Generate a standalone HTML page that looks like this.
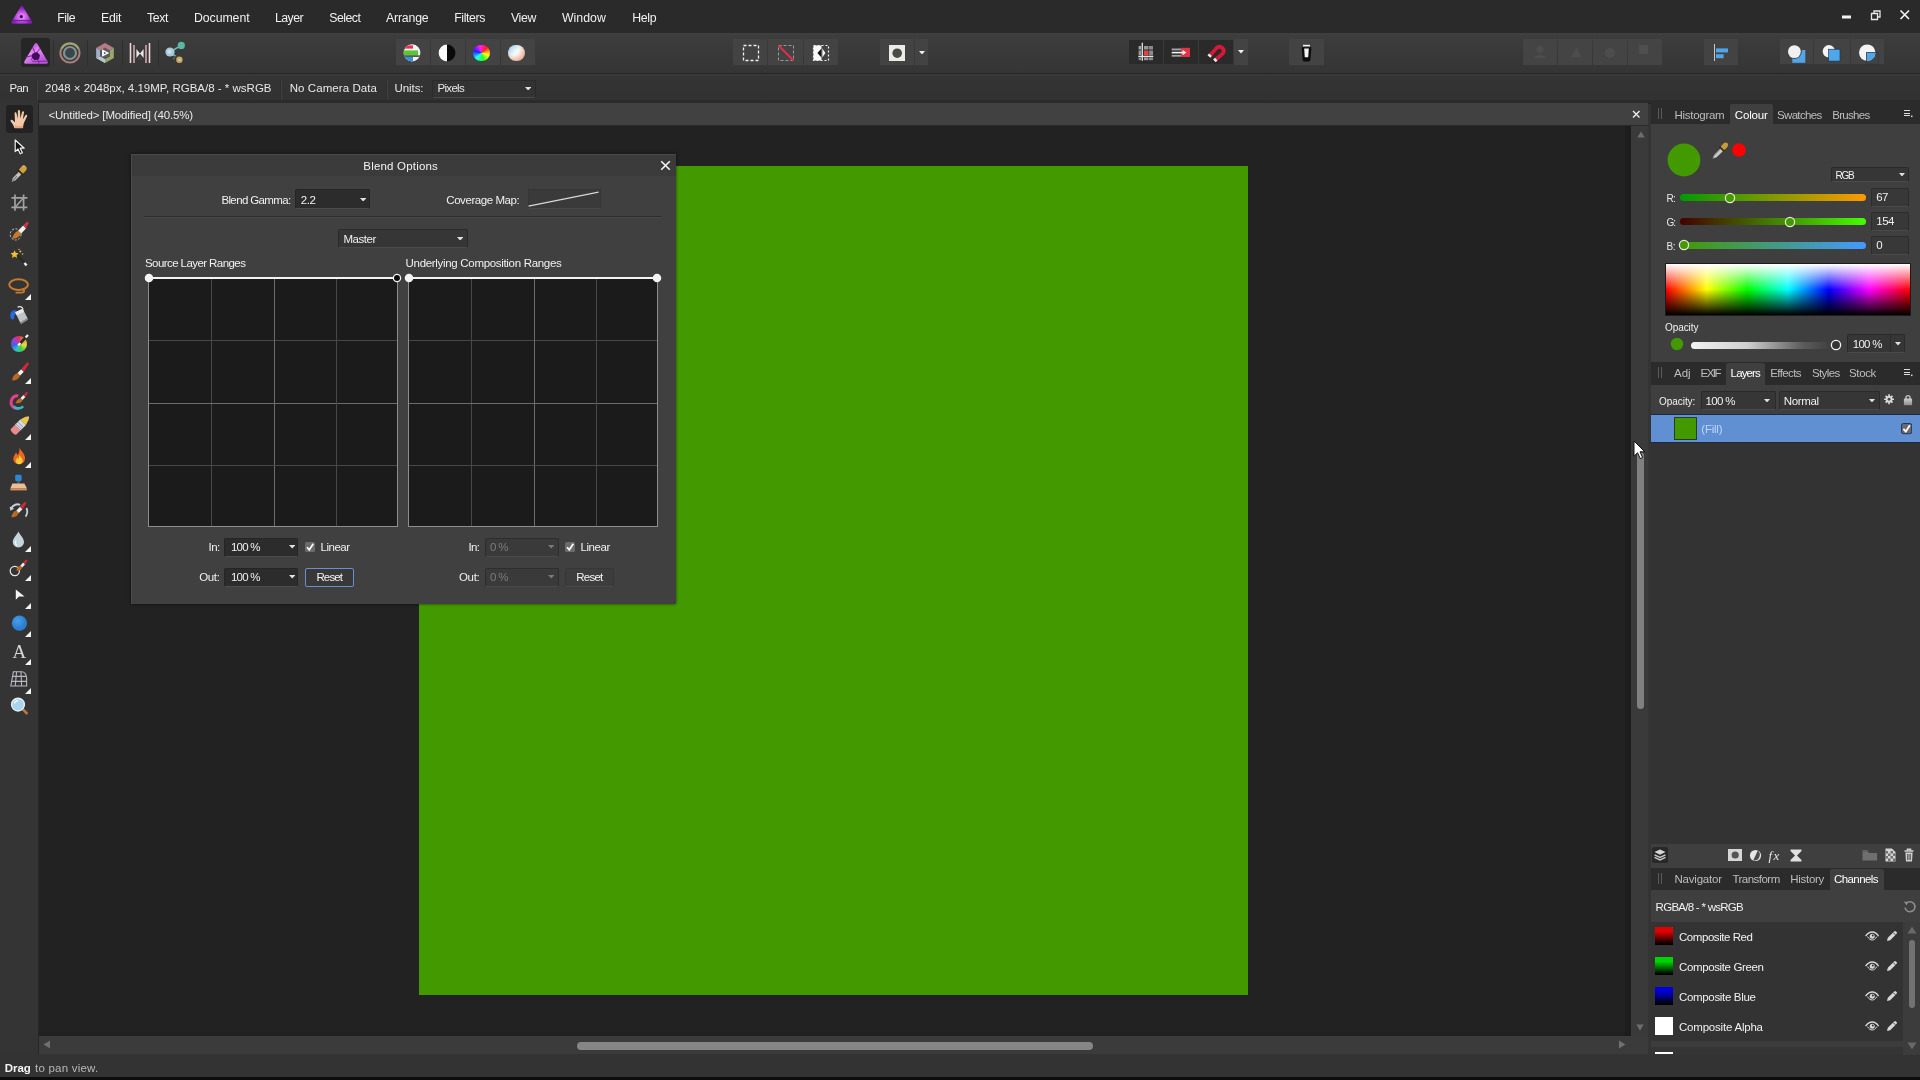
<!DOCTYPE html>
<html><head><meta charset="utf-8"><title>Affinity Photo</title>
<style>
html,body{margin:0;padding:0;background:#222;}
body{width:1920px;height:1080px;position:relative;overflow:hidden;will-change:transform;font-family:"Liberation Sans",sans-serif;}
div,span,svg{position:absolute;box-sizing:border-box;}
span{white-space:pre;}
</style></head><body>
<div style="left:0px;top:0px;width:1920px;height:33px;background:#2a2a2a;"></div>
<div style="left:0px;top:33px;width:1920px;height:40px;background:linear-gradient(180deg,#404040 0px,#3d3d3d 3px,#3a3a3a 14px,#353535 40px);"></div>
<div style="left:0px;top:73px;width:1920px;height:1.3px;background:#262626;"></div>
<div style="left:0px;top:74.3px;width:1920px;height:25.7px;background:linear-gradient(180deg,#3b3b3b 0px,#353535 2px,#333333 8px,#323232 26px);"></div>
<div style="left:0px;top:100px;width:38px;height:955px;background:#343434;"></div>
<div style="left:38px;top:100px;width:1882px;height:3px;background:#2b2b2b;"></div>
<div style="left:38px;top:103px;width:1px;height:952px;background:#262626;"></div>
<div style="left:39px;top:103px;width:1609px;height:21.5px;background:#414141;"></div>
<div style="left:39px;top:124.5px;width:1609px;height:1.5px;background:#2a2a2a;"></div>
<div style="left:39px;top:126px;width:1592px;height:910px;background:#222222;"></div>
<div style="left:1624.5px;top:126px;width:6.5px;height:910px;background:#1d1d1d;"></div>
<div style="left:39px;top:1032px;width:1586px;height:4px;background:#1f1f1f;"></div>
<div style="left:1631px;top:126px;width:17px;height:910px;background:#3a3a3a;"></div>
<div style="left:39px;top:1036px;width:1609px;height:18px;background:#3b3b3b;"></div>
<div style="left:1648px;top:104px;width:3px;height:951px;background:#343434;"></div>
<div style="left:0px;top:1054px;width:1920px;height:24px;background:#333333;"></div>
<div style="left:0px;top:1077px;width:1920px;height:3px;background:#0c0c0c;"></div>
<div style="left:419px;top:166px;width:829px;height:829px;background:#439a00;"></div>
<span style="left:57.20px;top:12.00px;font-size:12.3px;line-height:12.3px;letter-spacing:-0.504px;color:#f0f0f0;">File</span>
<span style="left:101.00px;top:12.00px;font-size:12.3px;line-height:12.3px;letter-spacing:-0.297px;color:#f0f0f0;">Edit</span>
<span style="left:147.00px;top:12.00px;font-size:12.3px;line-height:12.3px;letter-spacing:-0.388px;color:#f0f0f0;">Text</span>
<span style="left:194.00px;top:12.00px;font-size:12.3px;line-height:12.3px;letter-spacing:-0.068px;color:#f0f0f0;">Document</span>
<span style="left:275.00px;top:12.00px;font-size:12.3px;line-height:12.3px;letter-spacing:-0.552px;color:#f0f0f0;">Layer</span>
<span style="left:329.20px;top:12.00px;font-size:12.3px;line-height:12.3px;letter-spacing:-0.496px;color:#f0f0f0;">Select</span>
<span style="left:386.00px;top:12.00px;font-size:12.3px;line-height:12.3px;letter-spacing:-0.178px;color:#f0f0f0;">Arrange</span>
<span style="left:454.20px;top:12.00px;font-size:12.3px;line-height:12.3px;letter-spacing:-0.382px;color:#f0f0f0;">Filters</span>
<span style="left:511.00px;top:12.00px;font-size:12.3px;line-height:12.3px;letter-spacing:-0.358px;color:#f0f0f0;">View</span>
<span style="left:562.00px;top:12.00px;font-size:12.3px;line-height:12.3px;letter-spacing:0.011px;color:#f0f0f0;">Window</span>
<span style="left:632.30px;top:12.00px;font-size:12.3px;line-height:12.3px;letter-spacing:-0.323px;color:#f0f0f0;">Help</span>
<svg style="left:1842px;top:15px;" width="10" height="4" viewBox="0 0 10 4"><rect x="0" y="0.5" width="9" height="3" fill="#f2f2f2"/></svg>
<svg style="left:1870px;top:9px;" width="12" height="12" viewBox="0 0 12 12"><path d="M1.5 4.5h6v6h-6z M4 4V2h6v6H8" fill="none" stroke="#e8e8e8" stroke-width="1.3"/></svg>
<svg style="left:1899px;top:9px;" width="12" height="12" viewBox="0 0 12 12"><path d="M1.5 1.5l8.5 8.5M10 1.5L1.5 10" stroke="#f2f2f2" stroke-width="1.7"/></svg>
<span style="left:9.40px;top:83.00px;font-size:11.5px;line-height:11.5px;letter-spacing:-0.587px;color:#e8e8e8;">Pan</span>
<div style="left:36px;top:80px;width:1px;height:20px;background:#2d2d2d;"></div>
<div style="left:37px;top:80px;width:1px;height:20px;background:#424242;"></div>
<span style="left:45.00px;top:83.00px;font-size:11.5px;line-height:11.5px;letter-spacing:0.003px;color:#e8e8e8;">2048 × 2048px, 4.19MP, RGBA/8 - * wsRGB</span>
<div style="left:280px;top:80px;width:1px;height:20px;background:#2d2d2d;"></div>
<div style="left:281px;top:80px;width:1px;height:20px;background:#424242;"></div>
<span style="left:289.70px;top:83.00px;font-size:11.5px;line-height:11.5px;letter-spacing:0.073px;color:#e8e8e8;">No Camera Data</span>
<div style="left:386px;top:80px;width:1px;height:20px;background:#2d2d2d;"></div>
<div style="left:387px;top:80px;width:1px;height:20px;background:#424242;"></div>
<span style="left:394.40px;top:83.00px;font-size:11.5px;line-height:11.5px;letter-spacing:-0.049px;color:#e8e8e8;">Units:</span>
<div style="left:432px;top:79.5px;width:104px;height:18.5px;background:#333333;border:1px solid #2a2a2a;border-bottom-color:#484848;border-radius:2px;"></div>
<span style="left:437.50px;top:83.00px;font-size:11.5px;line-height:11.5px;letter-spacing:-0.696px;color:#e8e8e8;">Pixels</span>
<svg style="left:524.5px;top:86.7px;" width="6.4" height="3.6" viewBox="0 0 6.4 3.6"><path d="M0 0H6.4L3.2 3.6Z" fill="#e0e0e0"/></svg>
<span style="left:48.40px;top:110.00px;font-size:11.5px;line-height:11.5px;letter-spacing:-0.150px;color:#e8e8e8;">&lt;Untitled&gt; [Modified] (40.5%)</span>
<svg style="left:1632px;top:110px;" width="9" height="9" viewBox="0 0 9 9"><path d="M1 1l6.5 6.5M7.5 1L1 7.5" stroke="#eee" stroke-width="1.4"/></svg>
<span style="left:4.70px;top:1063.00px;font-size:11.5px;line-height:11.5px;letter-spacing:-0.025px;color:#f4f4f4;font-weight:700;">Drag</span>
<span style="left:35.00px;top:1063.00px;font-size:11.5px;line-height:11.5px;letter-spacing:0.222px;color:#b8b8b8;">to pan view.</span>
<div style="left:577px;top:1041.5px;width:515.5px;height:8px;background:#868686;border-radius:4px;"></div>
<div style="left:1636.6px;top:452px;width:7.4px;height:257px;background:#808080;border-radius:3.7px;"></div>
<svg style="left:43px;top:1040px;" width="8" height="9" viewBox="0 0 8 9"><path d="M7 0.5v8L0.5 4.5z" fill="#707070"/></svg>
<svg style="left:1618px;top:1040px;" width="8" height="9" viewBox="0 0 8 9"><path d="M1 0.5v8L7.5 4.5z" fill="#707070"/></svg>
<svg style="left:1636.8px;top:131.2px;" width="8" height="7" viewBox="0 0 8 7"><path d="M0.3 6.5h7.4L4 0.4z" fill="#6e6e6e"/></svg>
<svg style="left:1636.2px;top:1023.5px;" width="8" height="7" viewBox="0 0 8 7"><path d="M0.3 0.5h7.4L4 6.6z" fill="#6e6e6e"/></svg>
<div style="left:131px;top:153.5px;width:545px;height:450.5px;background:#404040;box-shadow:0 0 3px rgba(0,0,0,.6);"></div>
<div style="left:131px;top:153.5px;width:545px;height:22.5px;background:#3b3b3b;"></div>
<div style="left:131px;top:153.5px;width:545px;height:1px;background:#4a4a4a;"></div>
<div style="left:131px;top:153.5px;width:1px;height:450px;background:#4a4a4a;"></div>
<span style="left:363.30px;top:161.00px;font-size:11.5px;line-height:11.5px;letter-spacing:0.189px;color:#f2f2f2;">Blend Options</span>
<svg style="left:659.5px;top:159.5px;" width="11" height="11" viewBox="0 0 11 11"><path d="M1.2 1.2l8.6 8.6M9.8 1.2L1.2 9.8" stroke="#f4f4f4" stroke-width="1.6"/></svg>
<span style="left:221.40px;top:195.00px;font-size:11.5px;line-height:11.5px;letter-spacing:-0.625px;color:#f0f0f0;">Blend Gamma:</span>
<div style="left:295px;top:189px;width:75px;height:20px;background:#2c2c2c;border:1px solid #252525;border-bottom-color:#4c4c4c;border-radius:2px;"></div>
<span style="left:300.80px;top:195.00px;font-size:11.5px;line-height:11.5px;letter-spacing:-0.496px;color:#f0f0f0;">2.2</span>
<svg style="left:359.6px;top:197.7px;" width="6.4" height="3.6" viewBox="0 0 6.4 3.6"><path d="M0 0H6.4L3.2 3.6Z" fill="#e0e0e0"/></svg>
<span style="left:446.30px;top:195.00px;font-size:11.5px;line-height:11.5px;letter-spacing:-0.440px;color:#f0f0f0;">Coverage Map:</span>
<div style="left:527.5px;top:189px;width:73px;height:20px;background:#3a3a3a;border:1px solid #353535;border-bottom-color:#484848;"></div>
<svg style="left:527px;top:189px;" width="74" height="20" viewBox="0 0 74 20"><path d="M1.5 17.2L71.5 3.2" stroke="#d8d8d8" stroke-width="1.3"/></svg>
<div style="left:144px;top:216px;width:517px;height:1px;background:#2c2c2c;"></div>
<div style="left:144px;top:217px;width:517px;height:1px;background:#4a4a4a;"></div>
<div style="left:338px;top:229px;width:130px;height:19px;background:#363636;border:1px solid #2a2a2a;border-bottom-color:#4a4a4a;border-radius:2px;"></div>
<span style="left:343.40px;top:234.00px;font-size:11.5px;line-height:11.5px;letter-spacing:-0.424px;color:#f0f0f0;">Master</span>
<svg style="left:456.6px;top:236.7px;" width="6.4" height="3.6" viewBox="0 0 6.4 3.6"><path d="M0 0H6.4L3.2 3.6Z" fill="#e0e0e0"/></svg>
<span style="left:145.00px;top:258.00px;font-size:11.5px;line-height:11.5px;letter-spacing:-0.575px;color:#f0f0f0;">Source Layer Ranges</span>
<span style="left:405.60px;top:258.00px;font-size:11.5px;line-height:11.5px;letter-spacing:-0.314px;color:#f0f0f0;">Underlying Composition Ranges</span>
<div style="left:148.0px;top:277px;width:250px;height:249.5px;background:#1b1b1b;border:1px solid #8e8e8e;border-top:none;"></div>
<div style="left:211px;top:278px;width:1px;height:248px;background:#484848;"></div>
<div style="left:149.0px;top:340px;width:248px;height:1px;background:#484848;"></div>
<div style="left:274px;top:278px;width:1px;height:248px;background:#6c6c6c;"></div>
<div style="left:149.0px;top:402.5px;width:248px;height:1px;background:#6c6c6c;"></div>
<div style="left:336px;top:278px;width:1px;height:248px;background:#484848;"></div>
<div style="left:149.0px;top:465px;width:248px;height:1px;background:#484848;"></div>
<div style="left:148.5px;top:277px;width:249px;height:2px;background:#f4f4f4;"></div>
<div style="left:408.0px;top:277px;width:250px;height:249.5px;background:#1b1b1b;border:1px solid #8e8e8e;border-top:none;"></div>
<div style="left:471px;top:278px;width:1px;height:248px;background:#484848;"></div>
<div style="left:409.0px;top:340px;width:248px;height:1px;background:#484848;"></div>
<div style="left:534px;top:278px;width:1px;height:248px;background:#6c6c6c;"></div>
<div style="left:409.0px;top:402.5px;width:248px;height:1px;background:#6c6c6c;"></div>
<div style="left:596px;top:278px;width:1px;height:248px;background:#484848;"></div>
<div style="left:409.0px;top:465px;width:248px;height:1px;background:#484848;"></div>
<div style="left:408.5px;top:277px;width:249px;height:2px;background:#f4f4f4;"></div>
<svg style="left:144.2px;top:273px;" width="10" height="10" viewBox="0 0 10 10"><circle cx="5" cy="5" r="3.6" fill="#f4f4f4" stroke="#f4f4f4" stroke-width="1.3"/></svg>
<svg style="left:392.2px;top:273px;" width="10" height="10" viewBox="0 0 10 10"><circle cx="5" cy="5" r="3.6" fill="#0a0a0a" stroke="#f4f4f4" stroke-width="1.3"/></svg>
<svg style="left:404px;top:273px;" width="10" height="10" viewBox="0 0 10 10"><circle cx="5" cy="5" r="3.6" fill="#f4f4f4" stroke="#f4f4f4" stroke-width="1.3"/></svg>
<svg style="left:652.2px;top:273px;" width="10" height="10" viewBox="0 0 10 10"><circle cx="5" cy="5" r="3.6" fill="#f4f4f4" stroke="#f4f4f4" stroke-width="1.3"/></svg>
<span style="left:208.60px;top:542.00px;font-size:11.5px;line-height:11.5px;letter-spacing:-0.629px;color:#f0f0f0;">In:</span>
<div style="left:224px;top:537.5px;width:74px;height:19px;background:#2c2c2c;border:1px solid #252525;border-bottom-color:#4c4c4c;border-radius:2px;"></div>
<span style="left:231.00px;top:542.00px;font-size:11.5px;line-height:11.5px;letter-spacing:-0.782px;color:#f0f0f0;">100 %</span>
<svg style="left:288.7px;top:545.2px;" width="6.4" height="3.6" viewBox="0 0 6.4 3.6"><path d="M0 0H6.4L3.2 3.6Z" fill="#e0e0e0"/></svg>
<svg style="left:305px;top:542.3px;" width="10" height="10" viewBox="0 0 10 10"><rect x="0" y="0" width="10" height="10" rx="1.5" fill="#6b6b6b"/><path d="M2 5.2l2.3 2.6L8.3 1.8" fill="none" stroke="#fff" stroke-width="1.7"/></svg>
<span style="left:320.60px;top:542.00px;font-size:11.5px;line-height:11.5px;letter-spacing:-0.511px;color:#f0f0f0;">Linear</span>
<span style="left:199.20px;top:572.00px;font-size:11.5px;line-height:11.5px;letter-spacing:-0.358px;color:#f0f0f0;">Out:</span>
<div style="left:224px;top:567.5px;width:74px;height:19px;background:#2c2c2c;border:1px solid #252525;border-bottom-color:#4c4c4c;border-radius:2px;"></div>
<span style="left:231.00px;top:572.00px;font-size:11.5px;line-height:11.5px;letter-spacing:-0.782px;color:#f0f0f0;">100 %</span>
<svg style="left:288.7px;top:575.2px;" width="6.4" height="3.6" viewBox="0 0 6.4 3.6"><path d="M0 0H6.4L3.2 3.6Z" fill="#e0e0e0"/></svg>
<div style="left:304.5px;top:567.5px;width:49.5px;height:19px;background:#383838;border:1px solid #6d8fd0;border-radius:2px;"></div>
<span style="left:316.40px;top:572.00px;font-size:11.5px;line-height:11.5px;letter-spacing:-0.848px;color:#f4f4f4;">Reset</span>
<span style="left:468.40px;top:542.00px;font-size:11.5px;line-height:11.5px;letter-spacing:-0.595px;color:#f0f0f0;">In:</span>
<div style="left:484.5px;top:537.5px;width:74px;height:19px;background:#3a3a3a;border:1px solid #2e2e2e;border-bottom-color:#4a4a4a;border-radius:2px;"></div>
<span style="left:490.00px;top:542.00px;font-size:11.5px;line-height:11.5px;letter-spacing:-0.672px;color:#7c7c7c;">0 %</span>
<svg style="left:548.0999999999999px;top:545.2px;" width="6.4" height="3.6" viewBox="0 0 6.4 3.6"><path d="M0 0H6.4L3.2 3.6Z" fill="#7a7a7a"/></svg>
<svg style="left:565px;top:542.3px;" width="10" height="10" viewBox="0 0 10 10"><rect x="0" y="0" width="10" height="10" rx="1.5" fill="#6b6b6b"/><path d="M2 5.2l2.3 2.6L8.3 1.8" fill="none" stroke="#fff" stroke-width="1.7"/></svg>
<span style="left:580.60px;top:542.00px;font-size:11.5px;line-height:11.5px;letter-spacing:-0.461px;color:#f0f0f0;">Linear</span>
<span style="left:459.00px;top:572.00px;font-size:11.5px;line-height:11.5px;letter-spacing:-0.333px;color:#f0f0f0;">Out:</span>
<div style="left:484.5px;top:567.5px;width:74px;height:19px;background:#3a3a3a;border:1px solid #2e2e2e;border-bottom-color:#4a4a4a;border-radius:2px;"></div>
<span style="left:490.00px;top:572.00px;font-size:11.5px;line-height:11.5px;letter-spacing:-0.672px;color:#7c7c7c;">0 %</span>
<svg style="left:548.0999999999999px;top:575.2px;" width="6.4" height="3.6" viewBox="0 0 6.4 3.6"><path d="M0 0H6.4L3.2 3.6Z" fill="#7a7a7a"/></svg>
<div style="left:564.5px;top:567.5px;width:49.5px;height:19px;background:#3d3d3d;border:1px solid #373737;border-bottom-color:#4a4a4a;border-radius:2px;"></div>
<span style="left:576.30px;top:572.00px;font-size:11.5px;line-height:11.5px;letter-spacing:-0.768px;color:#f4f4f4;">Reset</span>
<div style="left:1651px;top:104px;width:269px;height:951px;background:#3f3f3f;"></div>
<div style="left:1651px;top:103px;width:269px;height:21.2px;background:#2b2b2b;"></div>
<div style="left:1730px;top:104px;width:42.5px;height:21.2px;background:#3f3f3f;border-radius:2px 2px 0 0;"></div>
<div style="left:1658px;top:108px;width:1px;height:11px;background:#5a5a5a;"></div>
<div style="left:1661px;top:108px;width:1px;height:11px;background:#5a5a5a;"></div>
<span style="left:1674.40px;top:110.00px;font-size:11.5px;line-height:11.5px;letter-spacing:-0.267px;color:#bdbdbd;">Histogram</span>
<span style="left:1734.80px;top:110.00px;font-size:11.5px;line-height:11.5px;letter-spacing:-0.163px;color:#ffffff;">Colour</span>
<span style="left:1777.00px;top:110.00px;font-size:11.5px;line-height:11.5px;letter-spacing:-0.670px;color:#bdbdbd;">Swatches</span>
<span style="left:1832.20px;top:110.00px;font-size:11.5px;line-height:11.5px;letter-spacing:-0.698px;color:#bdbdbd;">Brushes</span>
<svg style="left:1903px;top:109.5px;" width="10" height="9" viewBox="0 0 10 9"><path d="M0.5 0.8h6.6M0.5 3.2h6.6M0.5 5.6h6.6" stroke="#dcdcdc" stroke-width="1.3" shape-rendering="crispEdges"/><rect x="8" y="5.6" width="1.5" height="1.5" fill="#dcdcdc"/></svg>
<svg style="left:1666.2px;top:141.8px;" width="36" height="36" viewBox="0 0 36 36"><circle cx="18" cy="18" r="16.4" fill="#439a00"/></svg>
<svg style="left:1731px;top:142px;" width="16" height="16" viewBox="0 0 16 16"><circle cx="8" cy="8" r="6.8" fill="#ff0000"/></svg>
<svg style="left:1711px;top:141px;" width="19" height="19" viewBox="0 0 19 19"><path d="M2 17.5l1.2-3.6 6.6-6.8 2.6 2.6-6.8 6.6z" fill="#c9c9c9"/><path d="M2 17.5l1-2.8 6.4-6.6" stroke="#8a8a8a" stroke-width="1" fill="none"/><path d="M9.2 6.2l3.2-3.6c1.4-1.4 3.4-1.2 4.2 0s.6 2.6-.6 3.8l-3.4 3.2z" fill="#c99a3c"/><path d="M8.4 5.6l4.8 4.8" stroke="#3a2a10" stroke-width="1.6"/></svg>
<div style="left:1831px;top:167px;width:78px;height:15px;background:#363636;border:1px solid #2a2a2a;border-bottom-color:#4a4a4a;border-radius:2px;"></div>
<span style="left:1835.60px;top:171.00px;font-size:10px;line-height:10px;letter-spacing:-1.323px;color:#f0f0f0;">RGB</span>
<svg style="left:1899.0px;top:172.75px;" width="6" height="3.5" viewBox="0 0 6 3.5"><path d="M0 0H6L3.0 3.5Z" fill="#e0e0e0"/></svg>
<span style="left:1666.60px;top:194.00px;font-size:10px;line-height:10px;letter-spacing:-0.800px;color:#e8e8e8;">R:</span>
<div style="left:1679.5px;top:193.7px;width:186px;height:7.6px;background:linear-gradient(90deg,rgb(0,154,0),rgb(255,154,0));border-radius:4px;"></div>
<svg style="left:1724.2px;top:191.5px;" width="12" height="12" viewBox="0 0 12 12"><circle cx="6" cy="6" r="4.6" fill="#439a00" stroke="#e8e8cf" stroke-width="1.3"/></svg>
<div style="left:1871px;top:188px;width:38px;height:18.5px;background:#383838;border:1px solid #2c2c2c;border-bottom-color:#4a4a4a;border-radius:2px;"></div>
<span style="left:1876.30px;top:192.00px;font-size:11.5px;line-height:11.5px;letter-spacing:-0.796px;color:#f0f0f0;">67</span>
<span style="left:1666.60px;top:218.00px;font-size:10px;line-height:10px;letter-spacing:-1.078px;color:#e8e8e8;">G:</span>
<div style="left:1679.5px;top:217.7px;width:186px;height:7.6px;background:linear-gradient(90deg,rgb(67,0,0),rgb(67,255,0));border-radius:4px;"></div>
<svg style="left:1784px;top:215.5px;" width="12" height="12" viewBox="0 0 12 12"><circle cx="6" cy="6" r="4.6" fill="#439a00" stroke="#e8e8cf" stroke-width="1.3"/></svg>
<div style="left:1871px;top:212px;width:38px;height:18.5px;background:#383838;border:1px solid #2c2c2c;border-bottom-color:#4a4a4a;border-radius:2px;"></div>
<span style="left:1876.30px;top:216.00px;font-size:11.5px;line-height:11.5px;letter-spacing:-0.562px;color:#f0f0f0;">154</span>
<span style="left:1666.60px;top:242.00px;font-size:10px;line-height:10px;letter-spacing:-0.524px;color:#e8e8e8;">B:</span>
<div style="left:1679.5px;top:241.5px;width:186px;height:7.6px;background:linear-gradient(90deg,rgb(67,154,0),rgb(67,154,255));border-radius:4px;"></div>
<svg style="left:1678px;top:239.3px;" width="12" height="12" viewBox="0 0 12 12"><circle cx="6" cy="6" r="4.6" fill="#439a00" stroke="#e8e8cf" stroke-width="1.3"/></svg>
<div style="left:1871px;top:236px;width:38px;height:18.5px;background:#383838;border:1px solid #2c2c2c;border-bottom-color:#4a4a4a;border-radius:2px;"></div>
<span style="left:1876.30px;top:240.00px;font-size:11.5px;line-height:11.5px;letter-spacing:-0.196px;color:#f0f0f0;">0</span>
<div style="left:1664.5px;top:262.5px;width:246px;height:53.5px;background:linear-gradient(180deg,#fff 0%,rgba(255,255,255,0) 50%,rgba(0,0,0,0) 50%,#000 100%),linear-gradient(90deg,#f00 0%,#ff0 16.67%,#0f0 33.33%,#0ff 50%,#00f 66.67%,#f0f 83.33%,#f00 100%);border:1px solid #1c1c1c;"></div>
<span style="left:1665.00px;top:323.00px;font-size:10px;line-height:10px;letter-spacing:-0.072px;color:#f0f0f0;">Opacity</span>
<svg style="left:1670px;top:337px;" width="14" height="14" viewBox="0 0 14 14"><circle cx="7" cy="7" r="6.2" fill="#439a00"/></svg>
<div style="left:1691px;top:342px;width:140px;height:7px;background:linear-gradient(90deg,#f2f2f2 0%,#d0d0d0 40%,rgba(120,120,120,.5) 80%,rgba(70,70,70,0) 100%);border-radius:3.5px;"></div>
<svg style="left:1830px;top:339px;" width="12" height="12" viewBox="0 0 12 12"><circle cx="6" cy="6" r="4.6" fill="#333" stroke="#f4f4f4" stroke-width="1.3"/></svg>
<div style="left:1846.5px;top:334px;width:58.5px;height:18.5px;background:#363636;border:1px solid #2a2a2a;border-bottom-color:#4a4a4a;border-radius:2px;"></div>
<div style="left:1890px;top:335px;width:1px;height:16.5px;background:#2c2c2c;"></div>
<span style="left:1852.80px;top:339.00px;font-size:11.5px;line-height:11.5px;letter-spacing:-0.742px;color:#f0f0f0;">100 %</span>
<svg style="left:1895.0px;top:342.25px;" width="6" height="3.5" viewBox="0 0 6 3.5"><path d="M0 0H6L3.0 3.5Z" fill="#e0e0e0"/></svg>
<div style="left:1651px;top:362px;width:269px;height:23px;background:#2b2b2b;"></div>
<div style="left:1726px;top:363px;width:39px;height:23px;background:#3f3f3f;border-radius:2px 2px 0 0;"></div>
<div style="left:1658px;top:367px;width:1px;height:11px;background:#5a5a5a;"></div>
<div style="left:1661px;top:367px;width:1px;height:11px;background:#5a5a5a;"></div>
<span style="left:1674.00px;top:368.00px;font-size:11.5px;line-height:11.5px;letter-spacing:-0.007px;color:#bdbdbd;">Adj</span>
<span style="left:1700.50px;top:368.00px;font-size:11.5px;line-height:11.5px;letter-spacing:-1.515px;color:#bdbdbd;">EXIF</span>
<span style="left:1730.60px;top:368.00px;font-size:11.5px;line-height:11.5px;letter-spacing:-0.853px;color:#ffffff;">Layers</span>
<span style="left:1770.30px;top:368.00px;font-size:11.5px;line-height:11.5px;letter-spacing:-0.606px;color:#bdbdbd;">Effects</span>
<span style="left:1812.00px;top:368.00px;font-size:11.5px;line-height:11.5px;letter-spacing:-0.636px;color:#bdbdbd;">Styles</span>
<span style="left:1849.00px;top:368.00px;font-size:11.5px;line-height:11.5px;letter-spacing:-0.352px;color:#bdbdbd;">Stock</span>
<svg style="left:1903px;top:368.5px;" width="10" height="9" viewBox="0 0 10 9"><path d="M0.5 0.8h6.6M0.5 3.2h6.6M0.5 5.6h6.6" stroke="#dcdcdc" stroke-width="1.3" shape-rendering="crispEdges"/><rect x="8" y="5.6" width="1.5" height="1.5" fill="#dcdcdc"/></svg>
<span style="left:1659.00px;top:397.00px;font-size:10px;line-height:10px;letter-spacing:-0.047px;color:#f0f0f0;">Opacity:</span>
<div style="left:1701px;top:391px;width:75px;height:19px;background:#363636;border:1px solid #2a2a2a;border-bottom-color:#4a4a4a;border-radius:2px;"></div>
<span style="left:1705.60px;top:396.00px;font-size:11.5px;line-height:11.5px;letter-spacing:-0.682px;color:#f0f0f0;">100 %</span>
<svg style="left:1764.0px;top:398.75px;" width="6" height="3.5" viewBox="0 0 6 3.5"><path d="M0 0H6L3.0 3.5Z" fill="#e0e0e0"/></svg>
<div style="left:1779px;top:391px;width:101px;height:19px;background:#363636;border:1px solid #2a2a2a;border-bottom-color:#4a4a4a;border-radius:2px;"></div>
<span style="left:1783.80px;top:396.00px;font-size:11.5px;line-height:11.5px;letter-spacing:-0.343px;color:#f0f0f0;">Normal</span>
<svg style="left:1869.0px;top:398.75px;" width="6" height="3.5" viewBox="0 0 6 3.5"><path d="M0 0H6L3.0 3.5Z" fill="#e0e0e0"/></svg>
<svg style="left:1883px;top:394px;" width="12" height="12" viewBox="0 0 12 12"><g transform="translate(0.9,0.1) scale(0.86)"><path d="M6 0.300v11.400M0.300 6h11.400M2 2l8 8M10 2l-8 8" stroke="#dcdcdc" stroke-width="1.900"/><circle cx="6" cy="6" r="3.900" fill="#dcdcdc"/><circle cx="6" cy="6" r="1.700" fill="#484848"/></g></svg>
<svg style="left:1903px;top:394px;" width="10" height="12" viewBox="0 0 10 12"><path d="M3 5V3.600a2 2 0 0 1 4 0V5" fill="none" stroke="#c4c4c4" stroke-width="1.400"/><defs><linearGradient id="lk" x1="0" y1="0" x2="0" y2="1"><stop offset="0" stop-color="#cecece"/><stop offset="1" stop-color="#8c8c8c"/></linearGradient></defs><rect x="0.900" y="4.600" width="8.200" height="6.600" rx="0.800" fill="url(#lk)"/></svg>
<div style="left:1651px;top:414px;width:269px;height:430px;background:#333333;"></div>
<div style="left:1651px;top:414.2px;width:269px;height:28.5px;background:#1c2a44;"></div>
<div style="left:1651px;top:415.2px;width:269px;height:26.5px;background:#6090d2;"></div>
<div style="left:1674px;top:417.2px;width:23px;height:22.5px;background:#439a00;border:1px solid #2b3a20;"></div>
<span style="left:1701.30px;top:424.00px;font-size:11.5px;line-height:11.5px;letter-spacing:-0.225px;color:#bcd6ff;">(Fill)</span>
<svg style="left:1901.3px;top:423.4px;" width="11.2" height="11.2" viewBox="0 0 11.2 11.2"><rect x="0.500" y="0.500" width="10.200" height="10.200" rx="1.800" fill="#6a6a6a" stroke="#1c3568" stroke-width="1"/><path d="M2.4 5.8l2.4 2.8L8.9 2.2" fill="none" stroke="#fff" stroke-width="1.8"/></svg>
<div style="left:1651px;top:844.3px;width:269px;height:23.5px;background:#3f3f3f;"></div>
<svg style="left:1652px;top:847px;" width="16" height="16" viewBox="0 0 16 16"><rect x="0" y="0" width="16" height="16" rx="2" fill="#282828"/><path d="M8 2.5l5.5 2.6L8 7.7 2.5 5.1z" fill="#d8d8d8"/><path d="M2.5 7.8L8 10.4l5.5-2.6M2.5 10.4L8 13l5.5-2.6" fill="none" stroke="#c8c8c8" stroke-width="1.4"/></svg>
<svg style="left:1727.8px;top:849px;" width="14.4" height="12" viewBox="0 0 14.4 12"><rect x="0" y="0" width="14.4" height="12" fill="#d6d6d6"/><circle cx="7.2" cy="6" r="3.6" fill="#555"/></svg>
<svg style="left:1748.5px;top:848.5px;" width="13" height="13" viewBox="0 0 13 13"><circle cx="6.5" cy="6.5" r="5.6" fill="#e4e4e4"/><path d="M8.8 1.6A5.6 5.6 0 0 1 4.2 11.4z" fill="#4a4a4a"/></svg>
<span style="left:1768.60px;top:849.43px;font-size:13px;line-height:13px;letter-spacing:1.394px;color:#e8e8e8;font-family:'Liberation Serif',serif;font-style:italic;">fx</span>
<svg style="left:1789.5px;top:848.5px;" width="12" height="13" viewBox="0 0 12 13"><path d="M0.5 0.5h11v1.6L7 6.5l4.5 4.4v1.6h-11v-1.6L5 6.5 0.5 2.1z" fill="#e0e0e0"/></svg>
<svg style="left:1862px;top:848.5px;" width="15.5" height="12" viewBox="0 0 15.5 12"><path d="M0.5 2.5h5.2l1.4 1.6h8v7.4H0.5z" fill="#6f6f6f"/><path d="M0.5 1.2h5l1 1.3h-6z" fill="#6f6f6f"/></svg>
<svg style="left:1884.5px;top:848px;" width="11" height="14" viewBox="0 0 11 14"><path d="M0.5 0.5h6.4l3.6 3.6v9.4h-10z" fill="#d4d4d4"/><path d="M0.5 3h2.5v2.5H0.5zM5.5 3H8v2.5H5.5zM3 5.5h2.5V8H3zM8 5.5h2.5V8H8zM0.5 8H3v2.5H0.5zM5.5 8H8v2.5H5.5zM3 10.5h2.5V13H3zM8 10.5h2.5V13H8z" fill="#707070"/></svg>
<svg style="left:1904px;top:848px;" width="10" height="14" viewBox="0 0 10 14"><path d="M0.5 3h9M3.4 3V1.2h3.2V3" stroke="#d0d0d0" stroke-width="1.4" fill="none"/><path d="M1.4 4.5h7.2l-0.6 9H2z" fill="#d0d0d0"/><path d="M3.6 6v6M5 6v6M6.4 6v6" stroke="#444" stroke-width="0.8"/></svg>
<div style="left:1651px;top:867.7px;width:269px;height:22.5px;background:#2b2b2b;"></div>
<div style="left:1830px;top:868.7px;width:53.5px;height:22.5px;background:#3f3f3f;border-radius:2px 2px 0 0;"></div>
<div style="left:1658px;top:872.7px;width:1px;height:11px;background:#5a5a5a;"></div>
<div style="left:1661px;top:872.7px;width:1px;height:11px;background:#5a5a5a;"></div>
<span style="left:1674.40px;top:874.00px;font-size:11.5px;line-height:11.5px;letter-spacing:-0.191px;color:#bdbdbd;">Navigator</span>
<span style="left:1732.50px;top:874.00px;font-size:11.5px;line-height:11.5px;letter-spacing:-0.530px;color:#bdbdbd;">Transform</span>
<span style="left:1790.30px;top:874.00px;font-size:11.5px;line-height:11.5px;letter-spacing:-0.297px;color:#bdbdbd;">History</span>
<span style="left:1834.00px;top:874.00px;font-size:11.5px;line-height:11.5px;letter-spacing:-0.574px;color:#ffffff;">Channels</span>
<span style="left:1655.60px;top:902.00px;font-size:11.5px;line-height:11.5px;letter-spacing:-0.728px;color:#f0f0f0;">RGBA/8 - * wsRGB</span>
<svg style="left:1903px;top:899.5px;" width="14" height="14" viewBox="0 0 14 14"><path d="M3.2 3.4A5 5 0 1 1 2 7.6" fill="none" stroke="#8e8e8e" stroke-width="1.6"/><path d="M0.8 1.6l4 0.4-1.2 3.6z" fill="#8e8e8e"/></svg>
<div style="left:1651px;top:921.5px;width:252px;height:119.5px;background:#333333;"></div>
<div style="left:1903px;top:921.5px;width:17px;height:133px;background:#3c3c3c;"></div>
<div style="left:1651px;top:1041px;width:252px;height:6px;background:#3c3c3c;"></div>
<div style="left:1651px;top:1047px;width:252px;height:7.5px;background:#353535;"></div>
<svg style="left:1906.5px;top:926px;" width="10" height="8" viewBox="0 0 10 8"><path d="M0.5 7.5h9L5 0.5z" fill="#686868"/></svg>
<svg style="left:1906.5px;top:1042px;" width="10" height="8" viewBox="0 0 10 8"><path d="M0.5 0.5h9L5 7.5z" fill="#686868"/></svg>
<div style="left:1908.6px;top:939.5px;width:6.2px;height:68px;background:#727272;border-radius:3.1px;"></div>
<div style="left:1655px;top:926.8px;width:18px;height:18px;background:linear-gradient(180deg,#e00000 0%,#e00000 25%,#000 95%);"></div>
<span style="left:1679.00px;top:932.00px;font-size:11.5px;line-height:11.5px;letter-spacing:-0.443px;color:#f0f0f0;">Composite Red</span>
<svg style="left:1865px;top:930.8px;" width="15" height="11" viewBox="0 0 15 11"><path d="M0.6 5.2C2.6 2 5 1 7.2 1s4.6 1 6.4 4.2" fill="none" stroke="#d8d8d8" stroke-width="1.3"/><path d="M2.6 5.6c1.4 2.6 3 3.4 4.6 3.4s3.2-0.8 4.6-3.4" fill="none" stroke="#d8d8d8" stroke-width="1"/><circle cx="7.2" cy="5.2" r="2.5" fill="#d8d8d8"/><circle cx="7.8" cy="4.6" r="1" fill="#333"/></svg>
<svg style="left:1886.4px;top:929.8px;" width="12" height="12" viewBox="0 0 12 12"><path d="M1 11l0.8-3.2L8.2 1.4a1.2 1.2 0 0 1 1.7 0l0.7 0.7a1.2 1.2 0 0 1 0 1.7L4.2 10.2z" fill="#d8d8d8"/><path d="M7.2 2.6l2.2 2.2" stroke="#333" stroke-width="0.9"/></svg>
<div style="left:1655px;top:956.8px;width:18px;height:18px;background:linear-gradient(180deg,#00d400 0%,#00d400 25%,#000 95%);"></div>
<span style="left:1679.00px;top:962.00px;font-size:11.5px;line-height:11.5px;letter-spacing:-0.375px;color:#f0f0f0;">Composite Green</span>
<svg style="left:1865px;top:960.8px;" width="15" height="11" viewBox="0 0 15 11"><path d="M0.6 5.2C2.6 2 5 1 7.2 1s4.6 1 6.4 4.2" fill="none" stroke="#d8d8d8" stroke-width="1.3"/><path d="M2.6 5.6c1.4 2.6 3 3.4 4.6 3.4s3.2-0.8 4.6-3.4" fill="none" stroke="#d8d8d8" stroke-width="1"/><circle cx="7.2" cy="5.2" r="2.5" fill="#d8d8d8"/><circle cx="7.8" cy="4.6" r="1" fill="#333"/></svg>
<svg style="left:1886.4px;top:959.8px;" width="12" height="12" viewBox="0 0 12 12"><path d="M1 11l0.8-3.2L8.2 1.4a1.2 1.2 0 0 1 1.7 0l0.7 0.7a1.2 1.2 0 0 1 0 1.7L4.2 10.2z" fill="#d8d8d8"/><path d="M7.2 2.6l2.2 2.2" stroke="#333" stroke-width="0.9"/></svg>
<div style="left:1655px;top:986.8px;width:18px;height:18px;background:linear-gradient(180deg,#0000d8 0%,#0000d8 25%,#000 95%);"></div>
<span style="left:1679.00px;top:992.00px;font-size:11.5px;line-height:11.5px;letter-spacing:-0.334px;color:#f0f0f0;">Composite Blue</span>
<svg style="left:1865px;top:990.8px;" width="15" height="11" viewBox="0 0 15 11"><path d="M0.6 5.2C2.6 2 5 1 7.2 1s4.6 1 6.4 4.2" fill="none" stroke="#d8d8d8" stroke-width="1.3"/><path d="M2.6 5.6c1.4 2.6 3 3.4 4.6 3.4s3.2-0.8 4.6-3.4" fill="none" stroke="#d8d8d8" stroke-width="1"/><circle cx="7.2" cy="5.2" r="2.5" fill="#d8d8d8"/><circle cx="7.8" cy="4.6" r="1" fill="#333"/></svg>
<svg style="left:1886.4px;top:989.8px;" width="12" height="12" viewBox="0 0 12 12"><path d="M1 11l0.8-3.2L8.2 1.4a1.2 1.2 0 0 1 1.7 0l0.7 0.7a1.2 1.2 0 0 1 0 1.7L4.2 10.2z" fill="#d8d8d8"/><path d="M7.2 2.6l2.2 2.2" stroke="#333" stroke-width="0.9"/></svg>
<div style="left:1655px;top:1016.8px;width:18px;height:18px;background:#ffffff;"></div>
<span style="left:1679.00px;top:1022.00px;font-size:11.5px;line-height:11.5px;letter-spacing:-0.209px;color:#f0f0f0;">Composite Alpha</span>
<svg style="left:1865px;top:1020.8px;" width="15" height="11" viewBox="0 0 15 11"><path d="M0.6 5.2C2.6 2 5 1 7.2 1s4.6 1 6.4 4.2" fill="none" stroke="#d8d8d8" stroke-width="1.3"/><path d="M2.6 5.6c1.4 2.6 3 3.4 4.6 3.4s3.2-0.8 4.6-3.4" fill="none" stroke="#d8d8d8" stroke-width="1"/><circle cx="7.2" cy="5.2" r="2.5" fill="#d8d8d8"/><circle cx="7.8" cy="4.6" r="1" fill="#333"/></svg>
<svg style="left:1886.4px;top:1019.8px;" width="12" height="12" viewBox="0 0 12 12"><path d="M1 11l0.8-3.2L8.2 1.4a1.2 1.2 0 0 1 1.7 0l0.7 0.7a1.2 1.2 0 0 1 0 1.7L4.2 10.2z" fill="#d8d8d8"/><path d="M7.2 2.6l2.2 2.2" stroke="#333" stroke-width="0.9"/></svg>
<div style="left:1655px;top:1051.5px;width:18px;height:2.5px;background:#ffffff;"></div>
<div style="left:21px;top:38.4px;width:29px;height:28.3px;background:#262626;border-radius:3px;"></div>
<svg style="left:23px;top:41px;" width="27" height="24" viewBox="0 0 27 24"><defs><linearGradient id="pg" x1="0" y1="0" x2="0.6" y2="1"><stop offset="0" stop-color="#b040d8"/><stop offset="0.5" stop-color="#e48cf0"/><stop offset="1" stop-color="#b858d8"/></linearGradient></defs><path d="M13 3.600L23.400 21.200H2.600z" fill="url(#pg)" stroke="url(#pg)" stroke-width="3" stroke-linejoin="round"/><path d="M9.800 6.500L16.200 22.400M2.200 16.400L15.500 13M24.600 20.200L9 20.200M17 7.500L8 19" stroke="#7a1898" stroke-width="1.100" opacity=".8"/><path d="M9.400 12.800l4.400-1.800 3.200 3-1 4.200-4.600 1-2.800-3.200z" fill="#430a5e"/></svg>
<div style="left:52.5px;top:40px;width:1px;height:26px;background:#2e2e2e;"></div>
<div style="left:87.2px;top:40px;width:1px;height:26px;background:#2e2e2e;"></div>
<div style="left:122.4px;top:40px;width:1px;height:26px;background:#2e2e2e;"></div>
<div style="left:157.5px;top:40px;width:1px;height:26px;background:#2e2e2e;"></div>
<svg style="left:58px;top:40.5px;" width="24" height="24" viewBox="0 0 24 24"><circle cx="12" cy="12" r="9.6" fill="none" stroke="#a88078" stroke-width="2"/><path d="M3.6 7.5A9.6 9.6 0 0 1 20.4 7.5" fill="none" stroke="#a0a870" stroke-width="2"/><circle cx="12" cy="12" r="6" fill="#3c4648" stroke="#7c9494" stroke-width="2.2"/></svg>
<svg style="left:93px;top:40.5px;" width="24" height="24" viewBox="0 0 24 24"><path d="M12 2l8.8 5v10L12 22 3.2 17V7z" fill="#5a5a5a"/><path d="M12 2l8.8 5-4 2.4L12 6.6 7 9.6 3.2 7z" fill="#b47c84"/><path d="M3.2 7L7 9.6v5.8l-3.8 1.6z" fill="#a4acd0"/><path d="M20.8 7v10L12 22l-8.8-5 3.8-1.6 5 2.8 5-2.8V9.4z" fill="#98a868"/><path d="M3.2 17L7 15.4l5 2.8V22z" fill="#b8c8d8"/><path d="M9 8.2l7.4 3.8L9 15.8z" fill="#f4f4f4"/><path d="M11 11l2.2 1L11 13z" fill="#444"/></svg>
<svg style="left:129px;top:41px;" width="22" height="24" viewBox="0 0 22 24"><path d="M1.5 2v20M20.5 2v20" stroke="#e8d8d8" stroke-width="1.6"/><path d="M5 4v18M17 4v18" stroke="#c49a9a" stroke-width="1.8"/><path d="M7.4 8v9l7.2-9v9z" fill="#e8e8ee"/><path d="M11 15l2.6 3.4h-5.2z" fill="#555" opacity=".5"/></svg>
<svg style="left:163px;top:40px;" width="24" height="25" viewBox="0 0 24 25"><path d="M7 12L18.3 5.4M7 12l5.4 4.2M12.4 16.2l4 3.6" stroke="#70b8a8" stroke-width="1.6"/><path d="M12.4 16.2l4 3.6" stroke="#3a3a3a" stroke-width="2.2"/><circle cx="7" cy="12" r="4.6" fill="#a8c8d8"/><circle cx="6.4" cy="11.6" r="2.2" fill="#c8e0ec"/><circle cx="18.3" cy="5.4" r="3.6" fill="#58b8a4"/><circle cx="16.4" cy="19.8" r="3.2" fill="#c8a868"/><circle cx="16.4" cy="19.8" r="1.2" fill="#e0c890"/><circle cx="10.8" cy="18.6" r="1" fill="#6a6a50"/></svg>
<div style="left:395.5px;top:39px;width:34.3px;height:25.5px;background:#434343;"></div>
<div style="left:430.5px;top:39px;width:34.3px;height:25.5px;background:#434343;"></div>
<div style="left:465.5px;top:39px;width:34.3px;height:25.5px;background:#434343;"></div>
<div style="left:500.5px;top:39px;width:34.3px;height:25.5px;background:#434343;"></div>
<svg style="left:402px;top:43px;" width="20" height="20" viewBox="0 0 20 20"><defs><clipPath id="c1"><circle cx="10" cy="10" r="8.4"/></clipPath></defs><g clip-path="url(#c1)"><rect x="0" y="0" width="20" height="20" fill="#f2f2f2"/><rect x="0" y="1" width="20" height="5" fill="#f2f2f2"/><rect x="3" y="2.4" width="8" height="3.2" fill="#e83050"/><rect x="1" y="7.4" width="15" height="5" fill="#58c830"/><rect x="0" y="12.4" width="20" height="1.4" fill="#333"/><rect x="2" y="14" width="9" height="4.4" fill="#3890e0"/></g></svg>
<svg style="left:436.5px;top:43px;" width="20" height="20" viewBox="0 0 20 20"><circle cx="10" cy="10" r="8.4" fill="#0a0a0a"/><path d="M10 1.6a8.4 8.4 0 0 0 0 16.8z" fill="#fafafa"/></svg>
<div style="left:473.3px;top:44.7px;width:16.8px;height:16.8px;background:conic-gradient(from -15deg,#ff20ff,#ff2020,#ffff20,#20ff20,#20ffff,#2020ff,#ff20ff);border-radius:50%;"></div>
<div style="left:508.3px;top:44.7px;width:16.8px;height:16.8px;background:radial-gradient(circle at 35% 30%,#ffffff 0%,#f4f4f4 35%,#e8b090 75%,#d88858 100%);border-radius:50%;"></div>
<div style="left:508.3px;top:44.7px;width:16.8px;height:16.8px;background:linear-gradient(135deg,rgba(120,190,240,.9) 0%,rgba(255,255,255,0) 45%);border-radius:50%;"></div>
<div style="left:733.0px;top:39.2px;width:34.3px;height:26.2px;background:#434343;"></div>
<div style="left:768.3px;top:39.2px;width:34.3px;height:26.2px;background:#434343;"></div>
<div style="left:803.6px;top:39.2px;width:34.3px;height:26.2px;background:#434343;"></div>
<svg style="left:742px;top:43.7px;" width="18" height="18" viewBox="0 0 18 18"><rect x="1.5" y="1.5" width="15" height="15" fill="none" stroke="#f0f0f0" stroke-width="1.3" stroke-dasharray="3 2"/></svg>
<svg style="left:777px;top:43.7px;" width="18" height="18" viewBox="0 0 18 18"><rect x="1.5" y="1.5" width="15" height="15" fill="none" stroke="#9a9a9a" stroke-width="1" stroke-dasharray="3 2"/><path d="M1.5 1.5l15 15" stroke="#d83050" stroke-width="2.2"/></svg>
<svg style="left:812px;top:43.7px;" width="18" height="18" viewBox="0 0 18 18"><rect x="1.5" y="1.5" width="8" height="15" fill="#fafafa"/><rect x="1.5" y="1.5" width="15" height="15" fill="none" stroke="#f0f0f0" stroke-width="1.2" stroke-dasharray="2 2"/><path d="M9.5 4.5v9L5.4 9z" fill="#111"/><path d="M10.4 4.5l3 4.5-3 4.5z" fill="#fafafa"/></svg>
<div style="left:880px;top:39.2px;width:34.3px;height:26.2px;background:#434343;"></div>
<div style="left:915.3px;top:39.2px;width:12.7px;height:26.2px;background:#434343;"></div>
<svg style="left:888.7px;top:44.7px;" width="16.4" height="16.4" viewBox="0 0 16.4 16.4"><rect x="0" y="0" width="16.4" height="16.4" fill="#ecece6"/><circle cx="8.2" cy="8.2" r="4.8" fill="#4c4a44"/></svg>
<svg style="left:918.9px;top:50.95px;" width="6" height="3.5" viewBox="0 0 6 3.5"><path d="M0 0H6L3.0 3.5Z" fill="#f0f0f0"/></svg>
<div style="left:1129px;top:39.8px;width:34.3px;height:24.2px;background:#2a2a2a;"></div>
<div style="left:1164px;top:39.8px;width:34.3px;height:24.2px;background:#2a2a2a;"></div>
<div style="left:1199px;top:39.8px;width:34.3px;height:24.2px;background:#2a2a2a;"></div>
<div style="left:1234px;top:39.2px;width:13.5px;height:26.2px;background:#434343;"></div>
<svg style="left:1237.7px;top:50.25px;" width="6" height="3.5" viewBox="0 0 6 3.5"><path d="M0 0H6L3.0 3.5Z" fill="#f0f0f0"/></svg>
<svg style="left:1138px;top:42px;" width="16" height="19" viewBox="0 0 16 19"><path d="M4.300 0.800v18M0.300 14.300h15" stroke="#e4e4e4" stroke-width="1.300"/><rect x="0.600" y="8.500" width="2.600" height="4.600" fill="#9a9a9a"/><rect x="6" y="4" width="4.400" height="3.500" fill="#8e9aa0"/><rect x="11" y="4" width="4" height="3.500" fill="#8a8a8a"/><rect x="6" y="8.500" width="4.600" height="4.800" fill="#e8403c"/><rect x="11.200" y="8.500" width="3.800" height="4.800" fill="#8c8c94"/><rect x="0.600" y="4" width="2.600" height="3.500" fill="#a0a8a0"/><rect x="6" y="15.400" width="4.400" height="2.800" fill="#9a9a9a"/><rect x="11" y="15.400" width="4" height="2.800" fill="#8a8a8a"/><rect x="0.600" y="15.400" width="2.600" height="2.800" fill="#8a8a8a"/></svg>
<svg style="left:1171px;top:47px;" width="20" height="11" viewBox="0 0 20 11"><rect x="10" y="0.800" width="9" height="9.200" fill="#e03444"/><rect x="0.700" y="1.500" width="9.300" height="1.900" fill="#a4a4ac"/><rect x="0.700" y="7.900" width="9.300" height="1.800" fill="#a4a4a4"/><path d="M0.700 5.600h12" stroke="#f6f6f6" stroke-width="1.600"/><path d="M11.600 3l3.800 2.600-3.800 2.600z" fill="#f6f6f6"/></svg>
<svg style="left:1205.5px;top:41px;" width="21" height="21" viewBox="0 0 21 21"><path d="M4.2 14.2L11 6.6a4.2 4.2 0 0 1 6 5.6l-7.4 6.6" fill="none" stroke="#d81838" stroke-width="3.8"/><path d="M2.9 15.6l1.6-1.8M8.4 19.8l1.8-1.6" stroke="#f4e8e8" stroke-width="3.8"/></svg>
<div style="left:1289px;top:39.2px;width:34.8px;height:26.2px;background:#434343;"></div>
<svg style="left:1299.5px;top:44px;" width="13" height="18" viewBox="0 0 13 18"><path d="M3 0.8h7v1.6H3z" fill="#f4f4f4"/><path d="M1.6 3.2h9.8l-1 12.6c-0.1 1-0.8 1.6-1.8 1.6H4.4c-1 0-1.7-0.6-1.8-1.6z" fill="#0c0c0c"/><path d="M4.2 4.6h4.6l-0.6 8.6H4.8z" fill="#f4f4f4"/></svg>
<div style="left:1523px;top:39.2px;width:34.3px;height:26.2px;background:#444444;"></div>
<div style="left:1558.3px;top:39.2px;width:34px;height:26.2px;background:#444444;"></div>
<div style="left:1593.3px;top:39.2px;width:33.5px;height:26.2px;background:#444444;"></div>
<div style="left:1627.8px;top:39.2px;width:33.8px;height:26.2px;background:#444444;"></div>
<svg style="left:1533px;top:45px;" width="14" height="14" viewBox="0 0 14 14"><circle cx="7" cy="4.5" r="3.6" fill="#4d4d4d"/><path d="M1 13c0-4 12-4 12 0z" fill="#4d4d4d"/></svg>
<svg style="left:1568px;top:45px;" width="14" height="14" viewBox="0 0 14 14"><path d="M9 2l4 10H3z" fill="#4d4d4d"/></svg>
<svg style="left:1603px;top:45px;" width="14" height="14" viewBox="0 0 14 14"><circle cx="7" cy="8" r="5" fill="#4d4d4d"/></svg>
<svg style="left:1637px;top:44px;" width="14" height="14" viewBox="0 0 14 14"><rect x="2" y="1" width="9" height="9" fill="#4f4f4f"/></svg>
<div style="left:1704px;top:39.2px;width:34px;height:26.2px;background:#434343;"></div>
<svg style="left:1712px;top:44px;" width="18" height="17" viewBox="0 0 18 17"><path d="M2.5 0v17" stroke="#c8c8c8" stroke-width="1"/><rect x="4" y="4.4" width="12" height="4" fill="#4fa6ea"/><rect x="4" y="10.2" width="7.600" height="4" fill="#4fa6ea"/></svg>
<div style="left:1780.2px;top:39.1px;width:32.8px;height:25.4px;background:#434343;"></div>
<div style="left:1814px;top:39.1px;width:35.6px;height:25.4px;background:#434343;"></div>
<div style="left:1850.8px;top:39.1px;width:33.6px;height:25.4px;background:#434343;"></div>
<svg style="left:1786px;top:44px;" width="22" height="20" viewBox="0 0 22 20"><rect x="6.3" y="6" width="13" height="12.800" fill="#4fa6ea"/><circle cx="8.400" cy="7.600" r="7.400" fill="#434343"/><circle cx="8.400" cy="7.600" r="6.400" fill="#f0f0f0"/></svg>
<svg style="left:1821px;top:44px;" width="22" height="20" viewBox="0 0 22 20"><circle cx="7.900" cy="7.300" r="6.200" fill="#f4f4f4"/><rect x="7.600" y="5.250" width="11.400" height="11.850" fill="#4fa6ea" stroke="#203850" stroke-width="0.700"/></svg>
<svg style="left:1857px;top:43px;" width="24" height="22" viewBox="0 0 24 22"><defs><clipPath id="c3"><circle cx="10.200" cy="9.600" r="8.200"/></clipPath></defs><circle cx="10.200" cy="9.600" r="8.200" fill="#f4f4f4"/><rect x="9.500" y="9.600" width="11.800" height="11.400" fill="#4fa6ea" clip-path="url(#c3)"/><rect x="9.500" y="9.600" width="11.800" height="11.400" fill="none" stroke="#2a3a48" stroke-width="0.800"/></svg>
<div style="left:5.6px;top:105px;width:27px;height:27.6px;background:#222222;border-radius:3px;"></div>
<svg style="left:9.5px;top:109px;" width="19" height="20" viewBox="0 0 19 20"><path d="M4.4 19c-0.6-2.4-1.6-4-3.6-6.6-0.8-1.2 0.4-2.2 1.6-1.4l2.6 2.2L4.6 4.4c-0.2-1.4 1.6-1.6 1.9-0.2l1.2 5.6L7.9 2c0-1.4 2-1.4 2.1 0l0.4 7.6 1.6-6.6c0.4-1.4 2.2-1 2 0.4l-1.2 7.2 2.6-4.4c0.8-1.2 2.3-0.3 1.7 1l-3 6.4c-0.6 1.6-1 3.2-1.2 5.4z" fill="#f2c9a6"/><path d="M5 19.2h8l0.4-3c-2.6 1-5.8 1-8.6-0.2z" fill="#e8a888"/></svg>
<svg style="left:14px;top:139px;" width="12" height="16" viewBox="0 0 12 16"><path d="M1.2 1v11.6l2.8-2.6 2.2 4.8 2.2-1L6.2 9.2h4z" fill="#111" stroke="#f0f0f0" stroke-width="1.2" stroke-linejoin="round"/></svg>
<svg style="left:10px;top:164px;" width="18" height="19" viewBox="0 0 18 19"><path d="M1.6 17.8l1.2-3.8 6.4-6.6 2.6 2.6-6.6 6.4z" fill="#c4c4c4"/><path d="M2.4 17l4.6-4.8" stroke="#7a7a7a" stroke-width="1.2"/><path d="M8.6 6l2.8-3.2c1.6-1.6 3.8-1.4 4.8 0s0.6 3-0.6 4.2L12.6 10z" fill="#d0a040"/><path d="M12.2 2.4c1-0.8 2.4-0.6 3 0.2" stroke="#f0d080" stroke-width="1" fill="none"/><path d="M7.6 5.6l5.2 5.2" stroke="#3a2810" stroke-width="1.8"/></svg>
<svg style="left:10.5px;top:194px;" width="17" height="17" viewBox="0 0 17 17"><path d="M4 0.400v16.400M12.600 0.400v16.400M0.400 3.800h16M0.400 13.400h16" fill="none" stroke="#a2a2a2" stroke-width="1.700"/><path d="M4.600 12.800L12 4.400" stroke="#a2a2a2" stroke-width="1.500"/></svg>
<svg style="left:9px;top:220px;" width="22" height="21" viewBox="0 0 22 21"><ellipse cx="6.6" cy="14.4" rx="5.4" ry="5.6" fill="none" stroke="#d0d0d0" stroke-width="1" stroke-dasharray="2 1.6"/><path d="M3.4 18.6c0.4-3.4 2.4-6.2 5.8-8l3 3c-1.6 3.4-4.8 5.4-8.8 5z" fill="#c47a2a"/><path d="M9.2 10.6l5-5 2.8 2.8-4.8 5.2z" fill="#f0f0f0"/><path d="M14.2 5.6l3.4-3.6c1-0.8 2.6 0.6 1.8 1.8L17 8.4z" fill="#d83048"/></svg>
<svg style="left:9.5px;top:248px;" width="19" height="20" viewBox="0 0 19 20"><path d="M7 7l9.6 10.4" stroke="#2a2a2a" stroke-width="2.6"/><path d="M14.4 15l2.2 2.4" stroke="#f0f0f0" stroke-width="2.4"/><path d="M4.6 2.2l1.2 2.6 2.8 0.4-2 2 0.4 2.8-2.4-1.4-2.6 1.4 0.6-2.8-2-2 2.8-0.4z" fill="#f0c030"/><circle cx="10.4" cy="3.4" r="0.9" fill="#f0d060"/><circle cx="12.6" cy="6" r="0.8" fill="#e8c040"/><circle cx="9" cy="1.4" r="0.7" fill="#e8c040"/></svg>
<svg style="left:7.5px;top:278px;" width="22" height="17" viewBox="0 0 22 17"><ellipse cx="10.6" cy="6.6" rx="9.4" ry="5.4" fill="none" stroke="#c87a30" stroke-width="2"/><path d="M14 11.2c3 0.6 3 3.4-0.6 3.4H7.6" fill="none" stroke="#c87a30" stroke-width="1.6"/></svg>
<svg style="left:25px;top:293.5px;" width="6" height="6" viewBox="0 0 6 6"><path d="M6 0v6H0z" fill="#f4f4f4"/></svg>
<svg style="left:9px;top:306px;" width="20" height="19" viewBox="0 0 20 19"><path d="M2.6 13.6C-0.6 9 2 4.4 6.4 4l1.6 3.2C5.6 8 4.6 10.4 5.4 13z" fill="#2a6ad8"/><path d="M6.2 6.2l7.4-3.4 5 9.4-7.4 4.6z" fill="#c0c4c8"/><path d="M6.2 6.2l7.4-3.4 1.6 3-7.6 3.4z" fill="#e4e8ec"/><path d="M8.6 1.2c2.6-1.6 5.2 0 5.4 2.4" fill="none" stroke="#e0e0e0" stroke-width="1.2"/><path d="M11.2 16.8l7.4-4.6 0.4 1.6-7 4.4z" fill="#8a9098"/></svg>
<div style="left:10.8px;top:336px;width:16px;height:16px;background:conic-gradient(from 0deg,#e03060,#e0a030,#e0e040,#40d040,#30c0d0,#4060e0,#a040e0,#e03060);border-radius:50%;"></div>
<svg style="left:9px;top:332px;" width="22" height="22" viewBox="0 0 22 22"><path d="M10 12.6l8-8.6" stroke="#2a2a2a" stroke-width="2.8"/><path d="M9.2 13.4l2.2-2.4" stroke="#f4f4f4" stroke-width="2.4"/><path d="M16.6 5.6l2.4-2.6" stroke="#f4f4f4" stroke-width="2.2"/></svg>
<svg style="left:10.5px;top:361px;" width="19" height="21" viewBox="0 0 19 21"><path d="M1.2 19.6c0-3.6 1.8-6.4 5.4-7.6l2.6 2.6c-1.4 3.6-4.4 5.2-8 5z" fill="#b86a24"/><path d="M6.6 12l3.6-3.8 2.6 2.6-3.6 3.8z" fill="#f0f0f0"/><path d="M10.2 8.2l5.6-6.4c1-1 2.8 0.6 1.8 1.8l-4.8 7.2z" fill="#d42838"/></svg>
<svg style="left:25px;top:377.5px;" width="6" height="6" viewBox="0 0 6 6"><path d="M6 0v6H0z" fill="#f4f4f4"/></svg>
<svg style="left:8.5px;top:391px;" width="22" height="19" viewBox="0 0 22 19"><path d="M9.6 17.4C3.4 18.2 0.6 12.6 3 8c1.4-2.6 4-3.6 6.2-3.2" fill="none" stroke="#e04090" stroke-width="3"/><path d="M4.6 15.4c2.4 2.6 7 2.6 9.6 0" fill="none" stroke="#30b8c8" stroke-width="2.6"/><path d="M6.6 12.2c0.6-2.6 2.4-4.4 5-5.2l2 2c-1 2.6-3.6 3.8-7 3.200z" fill="#b86a24"/><path d="M11.600 7l2.800-3 2 2-2.800 3z" fill="#f0f0f0"/><path d="M14.400 4l2.800-3c0.800-0.800 2.200 0.600 1.400 1.600L16.400 6z" fill="#d42838"/></svg>
<svg style="left:9.5px;top:416px;" width="20" height="20" viewBox="0 0 20 20"><path d="M10.200 3.600l5.400-2.800 3 3-2.800 5.400z" fill="#f0c848"/><path d="M15.600 0.800l3 3 0.400-3.200z" fill="#f8e088"/><path d="M4.800 9l5.400-5.400 5.600 5.600-5.400 5.400z" fill="#d8d8e0"/><path d="M6 7.800l5.600 5.600M7.800 6l5.600 5.600" stroke="#9898a8" stroke-width="1"/><path d="M0.800 13l4-4 5.600 5.600-4 4c-1.600 1.200-6.800-4-5.600-5.600z" fill="#e88a90"/></svg>
<svg style="left:25px;top:433.5px;" width="6" height="6" viewBox="0 0 6 6"><path d="M6 0v6H0z" fill="#f4f4f4"/></svg>
<svg style="left:12px;top:447px;" width="15" height="18" viewBox="0 0 15 18"><path d="M7.400 0.600c1 2.800 5.200 5.600 5.600 10 0.400 3.600-2.200 6.600-5.800 6.600S0.800 14.600 1.400 11c0.400-2.400 1.800-3 2.400-5.400 1.200 1 1.600 2 1.800 3C7 6.400 7.800 3.800 7.400 0.600z" fill="#f06820"/><path d="M7.200 8c1 1.800 3.400 3.200 3.400 5.800 0 2-1.400 3.400-3.400 3.400s-3.400-1.400-3.400-3.400c0-1.600 1-2.200 1.600-3.400 0.600 0.600 0.800 1 1 1.600C6.800 10.800 7.400 9.600 7.200 8z" fill="#fcc838"/></svg>
<svg style="left:25px;top:461.5px;" width="6" height="6" viewBox="0 0 6 6"><path d="M6 0v6H0z" fill="#f4f4f4"/></svg>
<svg style="left:10px;top:474px;" width="18" height="17" viewBox="0 0 18 17"><rect x="5.200" y="0.800" width="6.400" height="6.400" rx="1.400" fill="#2a88d8"/><rect x="7.400" y="6.800" width="2.200" height="3" fill="#6a5a48"/><path d="M2.400 9.600h12l2.400 4.600H0.400z" fill="#e8c098"/><rect x="0.400" y="14.200" width="16.400" height="2.200" fill="#d89060"/></svg>
<svg style="left:9px;top:500px;" width="21" height="19" viewBox="0 0 21 19"><path d="M2 8.600c2-4 6.400-5.200 9-3.600" fill="none" stroke="#c8d0e0" stroke-width="2"/><path d="M0.600 6.400l0.800 4.400 3.800-2z" fill="#c8d0e0"/><path d="M17.400 8c1.400 3 0.800 6.400-0.800 8.600" fill="none" stroke="#c8d0e0" stroke-width="1.800"/><path d="M2.400 17.200c0.200-3 1.800-5.400 5-6.600l2.400 2.400c-1.200 3.200-4 4.600-7.400 4.200z" fill="#b86a24"/><path d="M7.400 10.600l3.600-3.800 2.400 2.400-3.600 3.800z" fill="#f0f0f0"/><path d="M11 6.800l4.200-4.600c1-1 2.800 0.600 1.800 1.800L13.400 9.200z" fill="#d42838"/></svg>
<svg style="left:12px;top:531px;" width="13" height="17" viewBox="0 0 13 17"><path d="M6.400 0.600c1.400 3.400 5.600 6.600 5.600 10.400 0 3-2.400 5.400-5.600 5.400S0.800 14 0.800 11C0.800 7.200 5 4 6.400 0.600z" fill="#c4d4dc"/><path d="M4 9.600c-1 1.600-0.600 3.800 1 4.800" stroke="#eef4f8" stroke-width="1.400" fill="none"/></svg>
<svg style="left:25px;top:545.5px;" width="6" height="6" viewBox="0 0 6 6"><path d="M6 0v6H0z" fill="#f4f4f4"/></svg>
<svg style="left:9px;top:557px;" width="22" height="21" viewBox="0 0 22 21"><circle cx="5.800" cy="14" r="4.600" fill="none" stroke="#e8e8e8" stroke-width="1.200"/><path d="M7.400 13.600c0.200-2.400 1.600-4.200 4-5l1.800 1.800c-0.800 2.600-3 3.600-5.800 3.200z" fill="#b86a24"/><path d="M11.400 8.600l2.800-3 1.800 1.800-2.800 3z" fill="#f0f0f0"/><path d="M14.200 5.600l2.600-2.800c0.800-0.800 2.200 0.600 1.400 1.400L16 7.400z" fill="#d42838"/></svg>
<svg style="left:25px;top:574.5px;" width="6" height="6" viewBox="0 0 6 6"><path d="M6 0v6H0z" fill="#f4f4f4"/></svg>
<svg style="left:15px;top:589px;" width="11" height="12" viewBox="0 0 11 12"><path d="M0.800 0.600v10.200l3.200-3.200h5.600z" fill="#f4f4f4"/></svg>
<svg style="left:25px;top:602.5px;" width="6" height="6" viewBox="0 0 6 6"><path d="M6 0v6H0z" fill="#f4f4f4"/></svg>
<svg style="left:10.5px;top:615px;" width="17" height="17" viewBox="0 0 17 17"><defs><radialGradient id="bc" cx="40%" cy="35%"><stop offset="0" stop-color="#48a0ec"/><stop offset="1" stop-color="#2c7ed0"/></radialGradient></defs><circle cx="8.400" cy="8.200" r="7.600" fill="url(#bc)"/></svg>
<svg style="left:25px;top:630.5px;" width="6" height="6" viewBox="0 0 6 6"><path d="M6 0v6H0z" fill="#f4f4f4"/></svg>
<span style="left:12.40px;top:642.34px;font-size:19px;line-height:19px;letter-spacing:0.427px;color:#d8d8d8;font-family:'Liberation Serif',serif;">A</span>
<svg style="left:25px;top:658.5px;" width="6" height="6" viewBox="0 0 6 6"><path d="M6 0v6H0z" fill="#f4f4f4"/></svg>
<svg style="left:10px;top:671px;" width="18" height="16" viewBox="0 0 18 16"><path d="M3.400 0.800h8.400c2.400 0 4.400 2.600 4.800 6.200v8H0.800z M1.400 10.400h15M2.400 5.400h13.400M6.600 0.800L5.200 15M11 0.800l0.600 14.200" fill="none" stroke="#b8b8c0" stroke-width="1.100"/></svg>
<svg style="left:25px;top:687.5px;" width="6" height="6" viewBox="0 0 6 6"><path d="M6 0v6H0z" fill="#f4f4f4"/></svg>
<svg style="left:9.5px;top:696px;" width="20" height="20" viewBox="0 0 20 20"><path d="M12 12.400l5.400 5.600" stroke="#b87838" stroke-width="2.600"/><circle cx="8" cy="8.600" r="6.400" fill="#a8d4f0" stroke="#e8f0f8" stroke-width="1.400"/><path d="M4.400 7.400c0.600-1.800 2-2.800 3.800-2.800" stroke="#ffffff" stroke-width="1.200" fill="none"/></svg>
<svg style="left:10px;top:3px;" width="24" height="24" viewBox="0 0 24 24"><defs><radialGradient id="lg" cx="50%" cy="62%" r="60%"><stop offset="0" stop-color="#f0a0f8"/><stop offset="0.55" stop-color="#c050e0"/><stop offset="1" stop-color="#7a20b8"/></radialGradient></defs><path d="M11.800 4.400L20.600 19.200H3z" fill="url(#lg)" stroke="url(#lg)" stroke-width="3" stroke-linejoin="round"/><path d="M3 17.600h17.600" stroke="#5a1080" stroke-width="1.200" opacity=".7"/><circle cx="11.300" cy="13.600" r="1.700" fill="#3c0858"/></svg>
<svg style="left:1633.2px;top:439.8px;" width="13" height="20" viewBox="0 0 13 20"><path d="M1 1v15.200l3.600-3.400 2.600 5.800 2.400-1.100-2.600-5.700h4.800z" fill="#ffffff" stroke="#111" stroke-width="1" stroke-linejoin="round"/></svg>
</body></html>
